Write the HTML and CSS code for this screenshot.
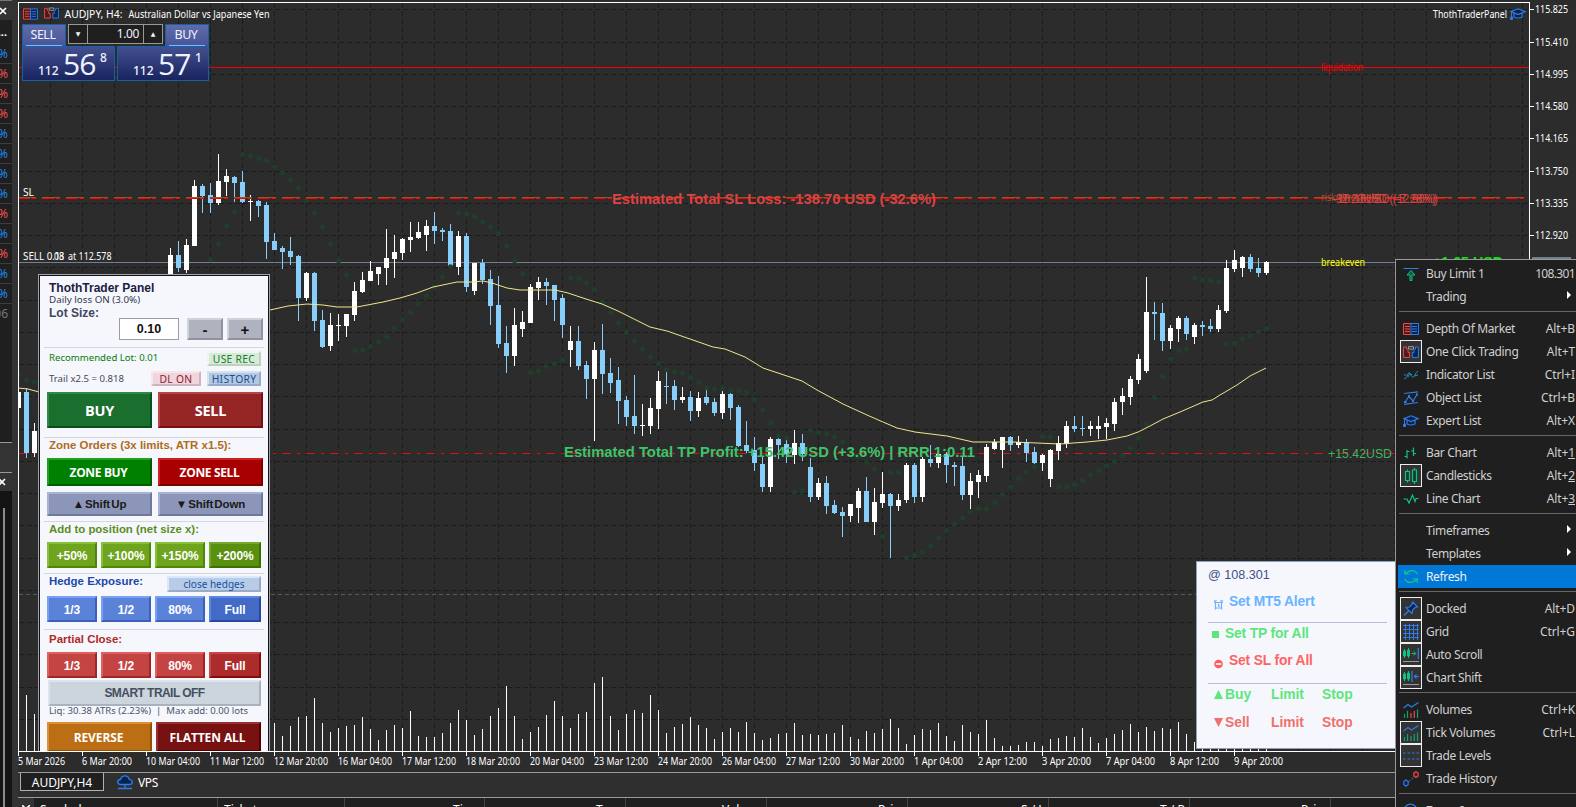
FILE: index.html
```html
<!DOCTYPE html>
<html lang="en">
<head>
<meta charset="utf-8">
<title>AUDJPY,H4</title>
<link rel="stylesheet" href="styles.css">
</head>
<body>
<svg class="defs" aria-hidden="true">
  <symbol id="i-dom" viewBox="0 0 16 12"><path d="M8 .5H.5v11H8" fill="#4a1c1c" stroke="#f04848"/><path d="M8 .5h7.500v11H8z" fill="#06244e" stroke="#2f7be8"/><path d="M2 3.500h5M2 6h5M2 8.500h5" stroke="#f04848"/><path d="M9 3.500h5M9 6h5M9 8.500h5" stroke="#2f7be8"/></symbol>
  <symbol id="i-oct" viewBox="0 0 16 12"><path d="M.6 1v10.400h6V6.500H5V4.500L3.500 3V1z" fill="#4a1c1c" stroke="#f04848"/><path d="M15.400 1v10.400h-6V6.500H11V4.500L12.500 3V1z" fill="#06244e" stroke="#2f7be8"/><path d="M5.500 .6h5v2.500h-5z" fill="none" stroke="#999"/></symbol>
  <symbol id="i-cap" viewBox="0 0 16 12"><path d="M8 .8L15.200 3.600 8 6.500 1 3.600z M4 5v4q4 2 8 0V5" fill="#06244e" stroke="#2f7be8" stroke-width="1.200"/><path d="M1.500 4v5M.5 11.500h2V9H.8z" fill="#2f7be8" stroke="#2f7be8"/></symbol>
  <symbol id="i-buy" viewBox="0 0 16 14"><path d="M.5 1.500h15" stroke="#2f7be8"/><path d="M8 3.500l4 4.500H9v5.500H7V8H4z" fill="#0b5c3c" stroke="#12c080"/></symbol>
  <symbol id="i-ind" viewBox="0 0 16 12"><path d="M1 10Q4 10 5.500 4q1-2 2.500 2t3.500 1Q13 3 15 2" fill="none" stroke="#2f7be8"/><path d="M1 6h2.500M5 8q2-5 4-2M11 7l4-1" fill="none" stroke="#12a070"/></symbol>
  <symbol id="i-obj" viewBox="0 0 16 14"><path d="M1 2.500L15 .8M1 13.300L15 11.500M2 11L6 5.500l4 4.500 4-6.500" fill="none" stroke="#2f7be8" stroke-width="1.200"/><path d="M1 10h2.500v2H1zM5 4h2v2.500H5zM9 9h2v2H9zM13 2.500h2v2h-2z" fill="#2f7be8"/></symbol>
  <symbol id="i-bar" viewBox="0 0 16 12"><path d="M4 3v8.500M1.500 9.500H4M4 4.500h2.500M10.500 .5V9M8 4h2.500M10.500 6.500H13" fill="none" stroke="#12c080" stroke-width="1.200"/></symbol>
  <symbol id="i-candle" viewBox="0 0 16 16"><path d="M4.500 1.500v2M4.500 12.500v2M2.500 3.500h4v9h-4zM11.500 0v2M11.500 13.500V16M9.500 2h4v11.500h-4z" fill="#0b4030" stroke="#12c080" stroke-width="1.200"/></symbol>
  <symbol id="i-line" viewBox="0 0 16 12"><path d="M.5 6h3.500l2 4 3.500-8 2.500 6.500L13 5.500h2.500" fill="none" stroke="#12c080" stroke-width="1.200"/></symbol>
  <symbol id="i-refresh" viewBox="0 0 16 15"><path d="M1.800 1v4h4.500M2.300 4.800Q6.500 .2 12 2.200L14.500 5M14.300 13.800V10H9.500M13.800 10.500Q9 15 4 12.600L1.500 10" fill="none" stroke="#12c890" stroke-width="1.200"/></symbol>
  <symbol id="i-pin" viewBox="0 0 16 16"><path d="M1 14.500L6 9.500" stroke="#2f7be8" stroke-width="1.400"/><path d="M9.500 1L14.500 6 12 6.500 9.500 9.300 9 12.500 3 6.500 6.500 6 9 3.500z" fill="#06244e" stroke="#2f7be8" stroke-width="1.200"/></symbol>
  <symbol id="i-grid" viewBox="0 0 16 16"><path d="M2.500 0v16M6.500 0v16M10.500 0v16M14.500 0v16M0 1.500h16M0 5.500h16M0 9.500h16M0 13.500h16" stroke="#2f7be8"/></symbol>
  <symbol id="i-scroll" viewBox="0 0 16 16"><path d="M1.500 2v9M5.500 1v10M.5 4h2v5h-2zM4.500 3h2v6h-2z" fill="none" stroke="#12c080"/><path d="M8.500 6.500h4M10.800 4.500l2 2-2 2" fill="none" stroke="#12c080"/><path d="M15.300 1v11" stroke="#2f7be8" stroke-width="1.300"/><path d="M0 14.500h16" stroke="#999"/></symbol>
  <symbol id="i-shift" viewBox="0 0 16 16"><path d="M1.500 2v9M5.500 1v10M.5 4h2v5h-2zM4.500 3h2v6h-2z" fill="none" stroke="#12c080"/><path d="M9 1v11M11.500 6.500H16M13.500 4.500l-2 2 2 2" fill="none" stroke="#2f7be8" stroke-width="1.200"/><path d="M0 14.500h16" stroke="#999"/></symbol>
  <symbol id="i-vol" viewBox="0 0 16 16"><path d="M.5 6L5 2.500 8.500 5 15.500 .5" fill="none" stroke="#2f7be8" stroke-width="1.200"/><path d="M1.500 12v4M4.500 9v7M14.500 7.500V16" stroke="#12a070" stroke-width="1.200"/><path d="M8 11v5M11.300 9v7" stroke="#f04848" stroke-width="1.200"/></symbol>
  <symbol id="i-tick" viewBox="0 0 16 16"><path d="M.5 6L5 2.500 8.500 5 15.500 .5" fill="none" stroke="#2f7be8" stroke-width="1.200"/><path d="M1.500 12v4M4.500 9v7M8 11v5M11.300 9v7M14.500 7.500V16" stroke="#12a070" stroke-width="1.200"/></symbol>
  <symbol id="i-levels" viewBox="0 0 16 10"><path d="M0 2h16M0 8h16" stroke="#2f7be8" stroke-width="1.200" stroke-dasharray="2.500 2"/></symbol>
  <symbol id="i-hist" viewBox="0 0 16 16"><path d="M6 10.500L10.500 6.500" stroke="#2f7be8" stroke-dasharray="2 1.500"/><path d="M.8 10.500L3 9l2.200 1.500v3L3 15.200l-2.200-1.700z" fill="#06244e" stroke="#2f7be8" stroke-width="1.200"/><path d="M10.800 2L13 .8 15.200 2v3L13 6.500 10.800 5z" fill="#4a1c1c" stroke="#f04848" stroke-width="1.200"/></symbol>
  <symbol id="i-zoom" viewBox="0 0 16 16"><circle cx="7.500" cy="7.500" r="6.300" fill="none" stroke="#2f7be8" stroke-width="1.200"/><path d="M7.500 4.500v6M4.500 7.500h6" stroke="#2f7be8"/></symbol>
</svg>

<div class="app">
  <aside class="rail">
    <div class="rail-head"><svg viewBox="0 0 8 8"><path d="M1 1l6 6M7 1L1 7" stroke="#fff" stroke-width="1.600"/></svg></div>
    <div class="rail-dots">...</div>
    <ul class="pct">
      <li>%</li><li class="r">%</li><li class="r">%</li><li class="r">%</li><li>%</li><li>%</li><li>%</li><li>%</li><li class="r">%</li><li>%</li><li class="r">%</li><li>%</li><li>%</li>
    </ul>
    <div class="rail-count">06</div>
    <div class="rail-gap"></div>
    <div class="rail-head second"><svg viewBox="0 0 8 8"><path d="M1 1l6 6M7 1L1 7" stroke="#fff" stroke-width="1.600"/></svg></div>
    <div class="rail-tree"><i></i></div>
  </aside>

  <main class="main">
    <section class="chart">
      <svg id="chart" width="1558" height="772" viewBox="18 0 1558 772"></svg>

      <div class="one-click">
        <div class="oc-top">
          <span class="oc-tab">SELL</span>
          <span class="oc-spin"><b>▼</b><em>1.00</em><b>▲</b></span>
          <span class="oc-tab">BUY</span>
        </div>
        <div class="oc-prices">
          <span class="oc-price"><small>112</small><big>56</big><sup>8</sup></span>
          <span class="oc-price"><small>112</small><big>57</big><sup>1</sup></span>
        </div>
      </div>

      <div class="panel">
        <h1>ThothTrader Panel</h1>
        <div class="daily">Daily loss ON (3.0%)</div>
        <div class="lot-label">Lot Size:</div>
        <div class="lot"><span class="lot-in">0.10</span><span class="btn step">-</span><span class="btn step">+</span></div>
        <hr class="d1">
        <div class="rec"><span>Recommended Lot: 0.01</span><span class="btn mini use">USE REC</span></div>
        <div class="trail"><span>Trail x2.5 = 0.818</span><span class="btn mini dl">DL ON</span><span class="btn mini hist">HISTORY</span></div>
        <div class="row two big"><span class="btn buy">BUY</span><span class="btn sell">SELL</span></div>
        <hr class="d2">
        <h2 class="zone-t">Zone Orders (3x limits, ATR x1.5):</h2>
        <div class="row two zone"><span class="btn zb">ZONE BUY</span><span class="btn zs">ZONE SELL</span></div>
        <div class="row two shift"><span class="btn sh">▲ Shift Up</span><span class="btn sh">▼ Shift Down</span></div>
        <hr class="d3">
        <h2 class="add-t">Add to position (net size x):</h2>
        <div class="row four"><span class="btn g">+50%</span><span class="btn g">+100%</span><span class="btn g">+150%</span><span class="btn g dark">+200%</span></div>
        <hr class="d4">
        <div class="hedge-head"><h2 class="hedge-t">Hedge Exposure:</h2><span class="btn mini close">close hedges</span></div>
        <div class="row four"><span class="btn b">1/3</span><span class="btn b">1/2</span><span class="btn b">80%</span><span class="btn b dark">Full</span></div>
        <hr class="d5">
        <h2 class="part-t">Partial Close:</h2>
        <div class="row four"><span class="btn p">1/3</span><span class="btn p">1/2</span><span class="btn p">80%</span><span class="btn p dark">Full</span></div>
        <div class="btn smart">SMART TRAIL OFF</div>
        <div class="liq">Liq: 30.38 ATRs (2.23%)&nbsp; |&nbsp; Max add: 0.00 lots</div>
        <div class="row two last"><span class="btn rev">REVERSE</span><span class="btn flat">FLATTEN ALL</span></div>
      </div>

      <div class="popup">
        <div class="at">@ 108.301</div>
        <div class="pl alert"><svg viewBox="0 0 9 10"><path d="M.7 3V.8h2M8.300 3V.8h-2M1.500 2.500h6v5.500h-6zM1 9.500l1-1.500M8 9.500L7 8M4.500 3.800v2l1.300.8" fill="none" stroke="#6ab4ff" stroke-width="1.200"/></svg>Set MT5 Alert</div>
        <div class="pl tp"><i></i>Set TP for All</div>
        <div class="pl sl"><svg viewBox="0 0 10 10"><circle cx="5" cy="5" r="4.800" fill="#ff5c5c"/><path d="M2 5h6" stroke="#fff" stroke-width="1.800"/></svg>Set SL for All</div>
        <div class="pl bs up"><svg viewBox="0 0 9 9"><path d="M4.500 0L9 9H0z"/></svg><span>Buy</span><span>Limit</span><span>Stop</span></div>
        <div class="pl bs down"><svg viewBox="0 0 9 9"><path d="M4.500 9L9 0H0z"/></svg><span>Sell</span><span>Limit</span><span>Stop</span></div>
      </div>
    </section>

    <nav class="tabs">
      <span class="tab">AUDJPY,H4</span>
      <span class="vps"><svg viewBox="0 0 16 15"><path d="M4 9.500Q.8 9.500.8 7T3.500 4.500Q4.500 .8 8 .8t4.200 3.500Q15.200 4.500 15.200 7T12.500 9.500z" fill="#06244e" stroke="#2f7be8" stroke-width="1.300"/><path d="M8 9.500V13M1 13.500h14M6 13.500h4" stroke="#2f7be8" stroke-width="1.300"/></svg>VPS</span>
    </nav>
    <div class="thead">
      <span class="tx"><svg viewBox="0 0 8 8"><path d="M0 0l8 8M8 0L0 8" stroke="#fff" stroke-width="1.600"/></svg></span>
      <span class="c1">Symbol</span><span class="c2">Ticket</span><span style="--p:108px">Time</span><span style="--p:111px">Type</span><span style="--p:96px">Volume</span><span style="--p:111px">Price</span><span style="--p:113px">S / L</span><span style="--p:111px">T / P</span><span style="--p:111px">Price</span><span></span>
    </div>
  </main>
</div>

<div class="menu">
  <div class="mi"><span class="ic"><svg style="height:14px"><use href="#i-buy"/></svg></span>Buy Limit 1<kbd class="num">108.301</kbd></div>
  <div class="mi"><span class="ic"></span>Trading<i class="sub"></i></div>
  <hr>
  <div class="mi"><span class="ic"><svg style="height:12px"><use href="#i-dom"/></svg></span>Depth Of Market<kbd>Alt+B</kbd></div>
  <div class="mi"><span class="ic on"><svg style="height:12px"><use href="#i-oct"/></svg></span>One Click Trading<kbd>Alt+T</kbd></div>
  <div class="mi"><span class="ic"><svg style="height:12px"><use href="#i-ind"/></svg></span>Indicator List<kbd>Ctrl+I</kbd></div>
  <div class="mi"><span class="ic"><svg style="height:14px"><use href="#i-obj"/></svg></span>Object List<kbd>Ctrl+B</kbd></div>
  <div class="mi"><span class="ic"><svg style="height:12px"><use href="#i-cap"/></svg></span>Expert List<kbd>Alt+X</kbd></div>
  <hr>
  <div class="mi"><span class="ic"><svg style="height:12px"><use href="#i-bar"/></svg></span>Bar Chart<kbd>Alt+<u>1</u></kbd></div>
  <div class="mi"><span class="ic on"><svg style="height:16px"><use href="#i-candle"/></svg></span>Candlesticks<kbd>Alt+<u>2</u></kbd></div>
  <div class="mi"><span class="ic"><svg style="height:12px"><use href="#i-line"/></svg></span>Line Chart<kbd>Alt+<u>3</u></kbd></div>
  <hr>
  <div class="mi"><span class="ic"></span>Timeframes<i class="sub"></i></div>
  <div class="mi"><span class="ic"></span>Templates<i class="sub"></i></div>
  <div class="mi sel"><span class="ic"><svg style="height:15px"><use href="#i-refresh"/></svg></span>Refresh</div>
  <hr>
  <div class="mi"><span class="ic on"><svg style="height:16px"><use href="#i-pin"/></svg></span>Docked<kbd>Alt+D</kbd></div>
  <div class="mi"><span class="ic on"><svg style="height:16px"><use href="#i-grid"/></svg></span>Grid<kbd>Ctrl+G</kbd></div>
  <div class="mi"><span class="ic on"><svg style="height:16px"><use href="#i-scroll"/></svg></span>Auto Scroll</div>
  <div class="mi"><span class="ic on"><svg style="height:16px"><use href="#i-shift"/></svg></span>Chart Shift</div>
  <hr>
  <div class="mi"><span class="ic"><svg style="height:16px"><use href="#i-vol"/></svg></span>Volumes<kbd>Ctrl+K</kbd></div>
  <div class="mi"><span class="ic on"><svg style="height:16px"><use href="#i-tick"/></svg></span>Tick Volumes<kbd>Ctrl+L</kbd></div>
  <div class="mi"><span class="ic on"><svg style="height:10px"><use href="#i-levels"/></svg></span>Trade Levels</div>
  <div class="mi"><span class="ic"><svg style="height:16px"><use href="#i-hist"/></svg></span>Trade History</div>
  <hr>
  <div class="mi"><span class="ic"><svg style="height:16px"><use href="#i-zoom"/></svg></span>Zoom In</div>
</div>
<script src="chart.js"></script>
</body>
</html>
```
FILE: styles.css
```css
* { box-sizing: border-box; margin: 0; padding: 0; }
html, body { width: 1576px; height: 807px; overflow: hidden; background: #2c2c2c; }
body { font-family: "Noto Sans", "Open Sans", sans-serif; font-size: 12px; color: #fff; position: relative; }
.defs { position: absolute; width: 0; height: 0; }
.app { display: flex; height: 807px; }

/* left rail */
.rail { width: 18px; flex: none; background: #333; display: flex; flex-direction: column; overflow: hidden; }
.rail > * { width: 12px; background: #1f1f1f; }
.rail-head { height: 20px; background: #333; border-top: 1px solid #777; display: flex; align-items: center; }
.rail-head svg { width: 8px; height: 8px; margin-left: -1px; }
.rail-dots { height: 24px; line-height: 24px; font-size: 11px; font-weight: bold; direction: rtl; padding-right: 5px; }
.pct { list-style: none; }
.pct li { height: 20px; line-height: 20px; border-bottom: 1px solid #3d3d3d; color: #1e8ae6; font-size: 12px; direction: rtl; padding-right: 4px; }
.pct .r { color: #f05050; }
.rail-count { color: #777; height: 139px; padding-top: 1px; direction: rtl; padding-right: 4px; border-bottom: 1px solid #999; }
.rail .rail-gap { height: 29px; background: #333; }
.rail .second { height: 19px; border-top-color: #999; }
.rail .second svg { margin-left: -2px; }
.rail .rail-tree { flex: 1; width: 12px; background: #141414; padding: 17px 0 0 3px; }
.rail-tree i { display: block; width: 2px; height: 100%; background: #8c8c8c; }

.main { flex: 1; display: flex; flex-direction: column; min-width: 0; }
.chart { height: 772px; position: relative; background: #2c2c2c; }
.chart > svg { display: block; }
#chart text { font-family: "Noto Sans", sans-serif; font-size: 10.5px; fill: #fff; }
#chart .est { font-family: "Liberation Sans", Arial, sans-serif; font-weight: bold; font-size: 15px; }
#chart .ar { font-family: "Liberation Sans", Arial, sans-serif; font-size: 13.300px; }

/* one click trading */
.one-click { position: absolute; left: 4px; top: 24px; width: 187px; color: #f0f2ff; }
.oc-top { display: flex; justify-content: space-between; height: 22px; }
.oc-tab { width: 44px; text-align: center; background: linear-gradient(#5f6ca8, #48549a); border: 1px solid #1560a8; border-bottom: 0; font-size: 12.500px; line-height: 20px; letter-spacing: -.5px; padding-right: 2px; }
.oc-tab::after { content: ""; display: block; height: 1px; margin: 0 1px 0 3px; background: #78bdf5; }
.oc-spin { width: 95px; height: 20px; border: 1px solid #999; display: flex; background: #1f1f1f; }
.oc-spin b { width: 18px; font-size: 6px; line-height: 17px; text-align: center; font-family: "DejaVu Sans", sans-serif; }
.oc-spin em { flex: 1; border: solid #999; border-width: 0 1px; font-style: normal; text-align: right; padding-right: 4px; line-height: 17px; letter-spacing: -.4px; }
.oc-prices { display: flex; justify-content: space-between; height: 35px; }
.oc-price { width: 93px; border: 1px solid #1560a8; background: linear-gradient(#43508f, #18245f); display: flex; padding-left: 15px; }
.oc-price + .oc-price { width: 92px; }
.oc-price small { font-size: 12px; font-weight: 500; padding-top: 14px; line-height: 20px; width: 25px; }
.oc-price big { font-size: 30px; line-height: 33px; letter-spacing: -.8px; width: 37px; font-family: "Open Sans", sans-serif; }
.oc-price sup { font-size: 12px; line-height: 22px; vertical-align: top; font-weight: 500; }

/* trade panel */
.panel { position: absolute; left: 20px; top: 274px; width: 232px; height: 477px; overflow: hidden; background: #f5f7fd; border: 1px solid #a0a3ad; border-bottom: 0; box-shadow: inset 1px 1px #111, inset -1px 0 #111; padding: 6px 0 0 8px; font-family: "Liberation Sans", Arial, sans-serif; color: #1c2040; }
.panel > * { flex: none; }
.panel h1 { margin-left: 2px; font-size: 12px; line-height: 15px; font-weight: bold; height: 13px; white-space: nowrap; }
.daily { margin-left: 2px; font: 9.800px/12px "Noto Sans", sans-serif; color: #34364c; height: 12px; }
.lot-label { margin-left: 2px; font-weight: bold; font-size: 12px; line-height: 14px; color: #404760; height: 12px; }
.lot { display: flex; margin-left: 72px; height: 22px; }
.lot-in { width: 60px; margin-right: 8px; background: #fff; border: 1px solid #9a9ca8; color: #111; font-weight: bold; font-size: 12.500px; text-align: center; line-height: 21px; }
.btn { display: flex; align-items: center; justify-content: center; font-weight: bold; font-size: 12px; white-space: nowrap; border: 2px solid; }
.step { width: 36px; margin-right: 4px; background: #aeb3bf; border-color: #cdd2dc #8e939f #8e939f #cdd2dc; color: #111; font-size: 15px; }
.panel hr { border: 0; height: 1px; background: #d4d7df; width: 220px; margin-left: -3px; }
.panel .d1 { margin-top: 7px; }
.rec { height: 20px; display: flex; justify-content: space-between; padding: 3px 8px 0 2px; width: 222px; font: 9.600px/13px "Noto Sans", sans-serif; color: #087c08; }
.btn.mini { height: 15px; font: 10.300px/10px "Noto Sans", sans-serif; letter-spacing: .3px; width: 54px; }
.use { background: #d6ecd8; border-color: #eef6ee #bcd2be #bcd2be #eef6ee; color: #207a2c; }
.trail { display: flex; padding: 3px 8px 0 2px; height: 24px; width: 222px; font: 9.600px/14px "Noto Sans", sans-serif; color: #45485a; }
.trail span:first-child { width: 102px; padding-top: 1px; }
.trail .dl { width: 50px; margin-right: 6px; background: #eed6dc; border-color: #f8e6ea #cfb4bc #cfb4bc #f8e6ea; color: #8c2034; }
.hist { background: #b6c8de; border-color: #d4e2f4 #98acc8 #98acc8 #d4e2f4; color: #1450a0; }
.row { display: flex; }
.two { gap: 6px; } .two .btn { width: 105px; }
.big { height: 36px; } .big .btn { font-family: "Open Sans", sans-serif; font-size: 14.500px; color: #fff; padding-top: 1px; letter-spacing: -.2px; }
.buy { background: #1a6e2e; border-color: #2f8a45 #06501a #06501a #2f8a45; }
.sell { background: #962626; border-color: #b84444 #741010 #741010 #b84444; }
.panel .d2 { margin-top: 9px; }
.panel h2 { margin-left: 2px; font-size: 11.450px; line-height: 14px; font-weight: bold; white-space: nowrap; }
.zone-t { color: #b06c18; height: 20px; }
.zone { height: 28px; } .zone .btn { font-size: 12px; font-family: "Open Sans", sans-serif; color: #fff; letter-spacing: -.35px; padding-right: 2px; }
.zb { background: #008000; border-color: #22a022 #005c00 #005c00 #22a022; }
.zs { background: #a80000; border-color: #c82222 #780000 #780000 #c82222; }
.shift { height: 24px; margin-top: 6px; } .shift .btn { font-size: 11.500px; letter-spacing: -.1px; word-spacing: -2px; }
.sh { background: #8c96b8; border-color: #a8b2d6 #6e789a #6e789a #a8b2d6; color: #1a1a1a; }
.panel .d3 { margin-top: 5px; }
.add-t { color: #5a8e1a; height: 20px; }
.four { gap: 4px; height: 26px; } .four .btn { width: 50px; color: #fff; letter-spacing: -.1px; padding-top: 1px; } .four .dark { width: 52px; }
.g { background: #6ea41e; border-color: #88c038 #4e8606 #4e8606 #88c038; } .g.dark { background: #5a9010; border-color: #76a82c #3e7000 #3e7000 #76a82c; }
.b { background: #5a82d8; border-color: #78a0f4 #3c60b8 #3c60b8 #78a0f4; } .b.dark { background: #426ac6; border-color: #5c86e0 #2848a0 #2848a0 #5c86e0; }
.p { background: #c44444; border-color: #e06060 #a42424 #a42424 #e06060; } .p.dark { background: #ac2c2c; border-color: #c84848 #880c0c #880c0c #c84848; }
.panel .d4 { margin-top: 5px; }
.hedge-head { display: flex; height: 22px; } .hedge-t { width: 118px; color: #1c48a8; }
.hedge-head .close { width: 94px; height: 16px; margin-top: 2px; background: #b8cce8; border-color: #d8e8ff #98acc8 #98acc8 #d8e8ff; color: #1450a0; letter-spacing: 0; font-size: 10px; }
.panel .d5 { margin-top: 7px; }
.part-t { color: #b02828; height: 22px; padding-top: 2px; }
.smart { margin: 2px 0 0 1px; width: 213px; height: 26px; background: #ccd4de; border-color: #dce4ee #aab2bc #aab2bc #dce4ee; color: #445060; letter-spacing: -.55px; }
.liq { margin-left: 2px; height: 16px; font: 9.600px/10px "Noto Sans", sans-serif; color: #4c5468; white-space: nowrap; }
.last { height: 30px; gap: 4px; } .last .btn { font-family: "Open Sans", sans-serif; color: #fff; padding-right: 2px; letter-spacing: -.1px; }
.rev { background: #bc6e14; border-color: #de9030 #945000 #945000 #de9030; }
.flat { background: #781212; border-color: #983030 #540000 #540000 #983030; }

/* price popup */
.popup { position: absolute; left: 1178px; top: 561px; width: 220px; height: 188px; background: #f5f7fd; border: 1px solid #8ca0be; padding: 4px 0 0 11px; font-family: "Liberation Sans", Arial, sans-serif; }
.at { color: #405088; font-size: 12.600px; line-height: 18px; height: 22px; }
.pl { display: flex; align-items: center; font-weight: bold; font-size: 13.800px; letter-spacing: -.15px; width: 179px; height: 27px; }
.pl svg { width: 9px; height: 10px; margin: 7px 6px 0 6px; }
.alert { color: #6ab4ff; height: 35px; border-bottom: 1px solid #b4c0d8; padding-bottom: 8px; }
.tp { color: #5ce67c; height: 24px; margin-top: -2px; } .tp i { width: 7px; height: 7px; background: #5ce67c; margin: 3px 6px 0 4px; }
.sl { color: #ff6464; height: 39px; border-bottom: 1px solid #b4c0d8; padding-bottom: 7px; }
.bs { height: 28px; margin-top: -4px; letter-spacing: 0; } .bs svg { height: 9px; margin: 0 2px 0 6px; } .bs span { width: 46px; } .bs span + span { width: 51px; }
.up { color: #5ce67c; fill: #5ce67c; } .bs.down { color: #f0706c; fill: #f0706c; margin-top: 0; }

/* bottom bars */
.tabs { height: 26px; border-top: 1px solid #9a9a9a; border-bottom: 1px solid #9a9a9a; background: #2f2f2f; display: flex; padding-left: 2px; font-size: 12px; }
.tab { width: 84px; height: 18px; background: #1f1f1f; border: 1px solid #b0b0b0; border-top: 0; text-align: center; line-height: 19px; letter-spacing: -.05px; }
.vps { display: flex; align-items: center; height: 19px; margin-left: 13px; letter-spacing: -.4px; } .vps svg { width: 16px; height: 15px; margin-right: 5px; }
.thead { height: 9px; overflow: hidden; background: #1f1f1f; display: flex; font-size: 12px; line-height: 23px; }
.thead span { width: 141px; border-right: 1px solid #444; padding-left: var(--p, 0); white-space: nowrap; overflow: hidden; }
.thead .tx { width: 16px; background: #333; border: 0; } .tx svg { display: block; width: 8px; height: 8px; margin: 7px 0 0 4px; }
.thead .c1 { width: 184px; padding-left: 6px; } .thead .c2 { width: 127px; padding-left: 6px; } .thead .c2 + span { width: 140px; }

/* context menu */
.menu { position: absolute; left: 1395px; top: 259px; width: 190px; height: 560px; background: #1f1f1f; border: 1px solid #999; padding: 2px 0 0 2px; font-family: "Noto Sans", sans-serif; font-size: 12px; color: #d0d0d0; }
.mi { display: flex; align-items: center; height: 23px; padding: 0 9px 0 2px; white-space: nowrap; letter-spacing: -.36px; }
.ic { width: 22px; height: 23px; margin-right: 4px; display: flex; align-items: center; justify-content: center; }
.ic.on { background: #333; border: 1px solid #eee; }
.ic svg { width: 16px; }
.mi kbd { margin-left: auto; font: inherit; letter-spacing: -.1px; }
.mi .num { letter-spacing: -.65px; }
.menu hr { border: 0; height: 1px; background: #666; margin: 3px 0 5px 1px; }
.sel { background: #0078d7; color: #f0f0f0; }
.sub { margin: 0 4px 3px auto; border: 4px solid transparent; border-left-color: #fff; border-right: 0; }
```
FILE: chart.js
```javascript
// x, high, low, body top, body bottom, direction (1 = up)
const candles = `18 392 408 392 408 1|26 388 458 392 453 0|34 423 457 431 453 1|170 248 276 255 276 1|178 241 272 255 268 0|186 239 273 245 270 1|194 180 246 186 246 1|202 184 213 186 196 0|210 183 213 195 203 0|218 154 205 181 203 1|226 169 196 176 182 1|234 176 202 177 183 0|242 171 203 182 202 0|250 195 221 201 202 1|258 200 217 201 206 0|266 202 259 205 242 0|274 233 250 241 250 0|282 246 269 248 252 0|290 237 265 251 257 0|298 255 321 256 298 0|306 272 301 273 298 1|314 272 331 273 321 0|322 310 348 320 347 0|330 313 351 325 346 1|338 314 341 325 326 1|346 314 337 314 326 1|354 282 321 291 315 1|362 272 293 280 292 1|370 261 281 271 281 1|378 267 285 267 274 1|386 229 285 258 268 1|394 235 278 252 259 1|402 238 260 239 253 1|410 222 252 237 240 1|418 222 239 232 238 1|426 220 251 226 235 1|434 212 244 226 231 0|442 228 241 230 232 0|450 224 266 231 266 0|458 231 275 236 267 1|466 233 292 236 287 0|474 263 295 263 291 1|482 259 284 263 280 0|490 270 325 279 306 0|498 276 348 305 344 0|506 326 373 343 356 0|514 308 366 325 356 1|522 311 337 322 329 1|530 284 323 287 323 1|538 277 300 282 288 1|546 278 305 282 286 0|554 285 321 285 300 0|562 294 338 298 325 0|570 326 367 341 350 1|578 326 370 341 366 0|586 361 399 365 379 0|594 342 441 350 379 1|602 324 394 350 374 0|610 358 393 373 383 0|618 367 424 380 401 0|626 396 426 400 417 0|634 375 434 416 426 0|642 404 436 425 426 1|650 398 434 408 426 1|658 371 429 381 409 1|666 372 404 386 387 0|674 380 410 386 400 0|682 387 403 397 400 1|690 391 421 397 411 0|698 392 417 398 411 1|706 390 405 397 403 0|714 398 416 402 413 0|722 391 419 394 413 1|730 393 420 394 408 0|738 405 447 407 446 0|746 421 453 445 451 0|754 437 471 450 463 0|762 456 492 464 487 0|770 437 492 439 487 1|778 438 459 439 445 0|786 440 463 444 454 0|794 430 464 443 455 1|802 434 461 443 454 0|810 458 502 467 497 0|818 478 500 483 497 1|826 476 514 483 506 0|834 500 514 505 513 0|842 507 537 512 516 0|850 504 522 504 516 1|858 488 523 491 508 1|866 477 522 491 522 0|874 488 535 502 522 1|882 472 508 494 503 1|890 493 558 494 506 0|898 494 511 500 506 1|906 463 503 465 500 1|914 463 503 465 497 0|922 457 502 459 497 1|930 445 467 459 463 0|938 450 468 454 463 1|946 452 483 454 465 0|954 462 486 465 467 0|962 456 500 466 495 0|970 473 509 481 495 1|978 470 498 475 482 1|986 444 482 447 476 1|994 439 450 442 449 1|1002 437 468 437 450 1|1010 436 451 437 445 0|1018 436 448 442 445 1|1026 439 462 442 453 0|1034 447 464 452 463 0|1042 454 471 455 463 1|1050 449 487 450 479 1|1058 436 460 443 451 1|1066 421 448 426 444 1|1074 416 432 426 429 0|1082 416 436 428 429 0|1090 421 436 426 429 1|1098 416 439 426 429 1|1106 418 439 423 427 1|1114 398 431 402 424 1|1122 388 415 396 402 1|1130 376 405 379 397 1|1138 354 384 359 380 1|1146 277 373 312 371 1|1154 302 340 312 314 0|1162 303 351 313 341 0|1170 325 349 328 341 1|1178 316 342 318 329 1|1186 316 340 318 334 0|1194 323 344 325 337 1|1202 321 336 325 327 0|1210 319 332 326 329 0|1218 305 332 310 329 1|1226 260 313 268 311 1|1234 250 272 260 269 1|1242 256 277 257 268 1|1250 254 272 257 269 0|1258 258 277 268 273 0|1266 261 275 262 273 1`.split('|').map(r => r.split(' ').map(Number));

// runs of indicator dots: start x, then one y per bar
const dots = [
  [18, 374, 379, 381],
  [210, 259, 243, 225, 211],
  [242, 154, 155, 158, 160, 166, 172, 179, 187, 200, 212, 226, 243, 260, 274],
  [354, 350, 349, 346, 341, 336, 327, 319, 312, 303, 295, 286, 276, 266],
  [458, 212, 213, 216, 221, 226, 233, 245, 260, 273],
  [530, 372, 370, 366, 363, 359],
  [570, 277, 278, 282, 289, 301, 312, 322, 332, 340, 348, 356, 363, 369, 371, 372, 377, 382, 387, 388, 388, 390, 390, 392, 399, 409, 422, 435, 437],
  [794, 491, 490],
  [810, 430, 432, 433, 436, 441, 450, 456, 462, 468],
  [882, 536], [890, 472, 472],
  [906, 557, 555, 551, 545, 537, 530, 523, 517, 511, 508, 508, 502, 494, 486, 478, 471, 466],
  [1042, 436, 436],
  [1058, 486, 486, 484, 480, 474, 470, 465, 461, 455, 447, 437, 424, 397, 376, 358, 350, 348],
  [1194, 277, 279, 280, 281],
  [1226, 343, 342, 338, 335, 331, 328]
];

const average = '18,388 28,389 39,392 60,396 270,310 288,306 307,304 323,305 337,307 357,307 383,302 400,298 417,293 433,287 457,282 473,282 483,281 492,283 507,288 520,290 555,290 568,293 586,299 602,304 618,311 650,327 667,331 690,339 713,347 725,349 745,357 763,368 787,376 802,381 817,390 843,404 867,415 883,422 897,428 915,432 947,436 973,442 1013,442 1037,443 1060,444 1087,442 1107,440 1127,436 1138,432 1150,426 1163,419 1180,412 1203,402 1212,400 1220,395 1237,385 1250,376 1266,368';

// bar tops, one per 8px from x = 274
const volumes = [723,736,726,717,716,698,723,732,728,726,725,717,729,740,730,725,728,711,736,737,737,733,723,710,720,735,729,716,708,686,716,739,732,727,715,701,716,728,714,712,683,677,716,730,714,710,713,695,710,733,727,724,717,725,728,739,732,728,732,722,733,740,738,734,733,723,735,734,735,734,733,725,737,739,731,733,729,719,728,744,735,729,730,723,736,741,725,732,734,720,738,746,746,745,742,742,746,739,738,736,737,728,737,743,738,734,730,724,732,727,731,728,729,722,734,742,749,749,749,749,749,749,749,749,749];

const rows = [9,42,74,106,138,171,203,235,267,300,332,364,396,429,461,493,525,558,590,622,654,687,719];
const prices = ['115.825','115.410','114.995','114.580','114.165','113.750','113.335','112.920'];
const times = ['5 Mar 2026','6 Mar 20:00','10 Mar 04:00','11 Mar 12:00','12 Mar 20:00','16 Mar 04:00','17 Mar 12:00','18 Mar 20:00','20 Mar 04:00','23 Mar 12:00','24 Mar 20:00','26 Mar 04:00','27 Mar 12:00','30 Mar 20:00','1 Apr 04:00','2 Apr 12:00','3 Apr 20:00','7 Apr 04:00','8 Apr 12:00','9 Apr 20:00'];

let s = '';
const rect = (x, y, w, h, f) => { s += `<rect x="${x}" y="${y}" width="${w}" height="${h}" fill="${f}"/>`; };
const line = (x1, y1, x2, y2, c, dash = '', w = 1) => { s += `<path d="M${x1} ${y1}L${x2} ${y2}" stroke="${c}" stroke-width="${w}" stroke-dasharray="${dash}"/>`; };
const text = (x, y, w, t, attr = '') => { s += `<text x="${x}" y="${y}" textLength="${w}" lengthAdjust="spacingAndGlyphs" xml:space="preserve" ${attr}>${t}</text>`; };

for (let x = 50; x < 1529; x += 32) line(x + .5, 3, x + .5, 751, '#1a1d1c', '5 3');
for (const y of rows) line(19, y + .5, 1529, y + .5, '#1a1d1c', '5 3');

line(19, 594.5, 1529, 594.5, '#55566a', '4 3');
line(18, 67.5, 1529, 67.5, '#f00000');
line(18, 262.5, 1529, 262.5, '#708090');
line(18, 453.5, 1529, 453.5, '#e01010', '9 6 3 6');

for (const v of [[26, 695], [34, 714]]) rect(v[0], v[1], 1, 751 - v[1], '#fff');
volumes.forEach((y, i) => rect(274 + i * 8, y, 1, 751 - y, '#fff'));

for (const [x, h, l, t, b, up] of candles) {
  const c = up ? '#fff' : '#87cefa';
  rect(x, h, 1, l - h, c);
  rect(x - 2, t, 5, b - t, c);
}
for (const [x0, ...ys] of dots) ys.forEach((y, i) => { s += `<circle cx="${x0 + i * 8 + .5}" cy="${y + .8}" r="2.500" fill="#1f3e2b"/>`; });
s += `<polyline points="${average}" fill="none" stroke="#f0e68c" stroke-width="1"/>`;

line(18, 198.5, 1529, 198.5, '#ff0000', '12 2 4 6');
line(18, 197.5, 1529, 197.5, '#a0521c', '18 6');

text(612, 204, 324, 'Estimated Total SL Loss: -138.70 USD (-32.6%)', 'class="est" style="fill:#d84444"');
text(564, 457, 411, 'Estimated Total TP Profit: +15.42 USD (+3.6%) | RRR 1:0.11', 'class="est" style="fill:#3cc46a"');
text(1321, 70.5, 42, 'liquidation', 'style="fill:#ff0000"');
text(1321, 201, 58, 'risk threshold', 'style="fill:#a0522d"');
text(1332, 203, 106, '-92.20USD (-12.96%)', 'class="ar" style="fill:#d84444"');
text(1334, 203, 102, '-10.16USD (-7.28%)', 'class="ar" style="fill:#d84444"');
text(1321, 265.5, 44, 'breakeven', 'style="fill:#ff0"');
text(1328, 458, 64, '+15.42USD', 'class="ar" style="fill:#3cb464"');
text(1433, 267, 70, '+1.05 USD', 'class="est" style="fill:#00f000"');
text(23, 196, 11, 'SL');
text(23, 260, 32, 'SELL 0.');
text(54, 260, 10, '08'); text(55, 260, 9, '13');
text(68, 260, 43.5, 'at 112.578');

// frame and scales
rect(18, 2, 1512, 1, '#fff'); rect(18, 2, 1, 750, '#fff'); rect(18, 751, 1512, 1, '#fff'); rect(1529, 2, 1, 750, '#fff');
prices.forEach((p, i) => { rect(1530, rows[i], 4, 1, '#fff'); text(1535, rows[i] + 4, 33, p); });
rect(1532, 257, 39, 14, '#708090');
times.forEach((t, i) => { rect(18 + i * 64, 751, 1, 5, '#fff'); text(18 + i * 64, 765, [47, 50][i] || (t.length > 11 ? 54 : 49), t); });

text(64.500, 17.5, 65, 'AUDJPY, H4:');
text(128.500, 17.5, 141, 'Australian Dollar vs Japanese Yen');
text(1433, 17.5, 74, 'ThothTraderPanel');
s += '<use href="#i-dom" x="23" y="8" width="15" height="12"/><use href="#i-oct" x="44" y="7" width="15" height="12"/><use href="#i-cap" x="1510" y="8" width="16" height="12"/>';
document.getElementById('chart').innerHTML = s.replace('textLength="65"', 'textLength="58"');
```
